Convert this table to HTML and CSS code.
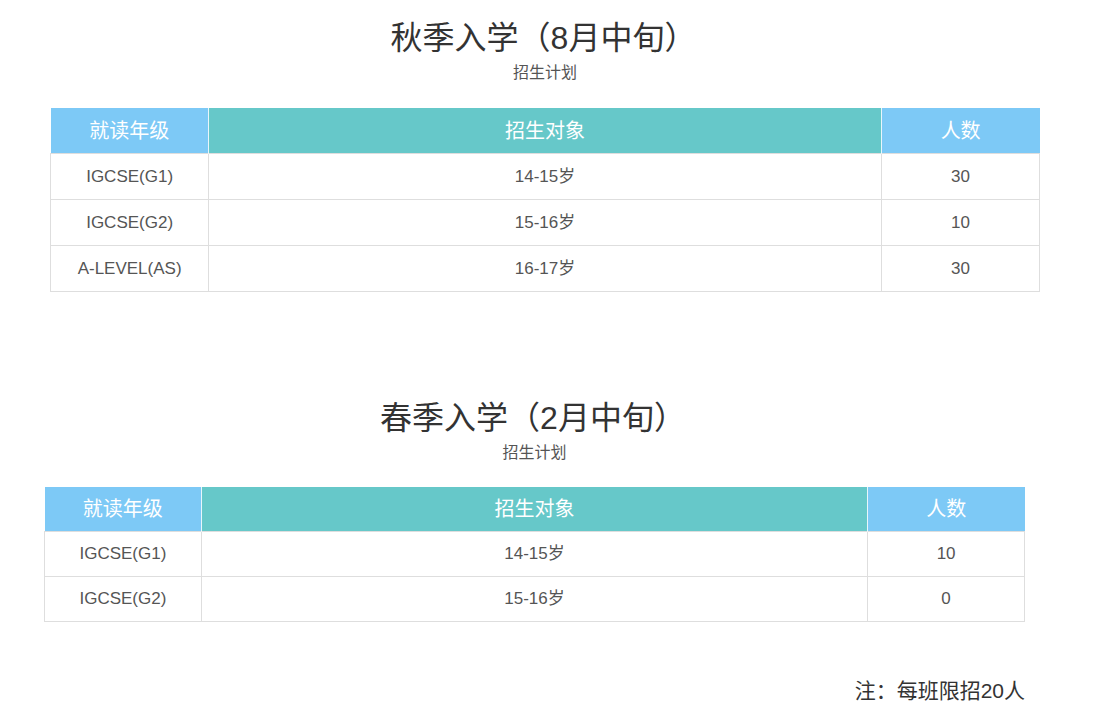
FILE: index.html
```html
<!DOCTYPE html>
<html lang="zh-CN">
<head>
<meta charset="utf-8">
<title>招生计划</title>
<link rel="stylesheet" href="styles.css">
</head>
<body>
<section class="plan plan-autumn">
  <h2 class="plan-title">秋季入学<span class="paren">（</span>8月中旬<span class="paren">）</span></h2>
  <p class="plan-sub">招生计划</p>
  <table class="plan-table">
    <colgroup><col class="c-grade"><col class="c-age"><col class="c-num"></colgroup>
    <thead>
      <tr><th class="th-blue">就读年级</th><th class="th-teal">招生对象</th><th class="th-blue">人数</th></tr>
    </thead>
    <tbody>
      <tr><td>IGCSE(G1)</td><td>14-15岁</td><td>30</td></tr>
      <tr><td>IGCSE(G2)</td><td>15-16岁</td><td>10</td></tr>
      <tr><td>A-LEVEL(AS)</td><td>16-17岁</td><td>30</td></tr>
    </tbody>
  </table>
</section>
<section class="plan plan-spring">
  <h2 class="plan-title">春季入学<span class="paren">（</span>2月中旬<span class="paren">）</span></h2>
  <p class="plan-sub">招生计划</p>
  <table class="plan-table">
    <colgroup><col class="c-grade"><col class="c-age"><col class="c-num"></colgroup>
    <thead>
      <tr><th class="th-blue">就读年级</th><th class="th-teal">招生对象</th><th class="th-blue">人数</th></tr>
    </thead>
    <tbody>
      <tr><td>IGCSE(G1)</td><td>14-15岁</td><td>10</td></tr>
      <tr><td>IGCSE(G2)</td><td>15-16岁</td><td>0</td></tr>
    </tbody>
  </table>
  <p class="note">注：每班限招20人</p>
</section>
</body>
</html>
```
FILE: styles.css
```css
html, body {
  margin: 0;
  padding: 0;
  background: #fff;
}
body {
  font-family: "Liberation Sans", "Noto Sans CJK SC", sans-serif;
  color: #555;
}
.plan {
  display: flex;
  flex-direction: column;
}
.plan-autumn {
  margin: 0 62px 0 50px;
  padding-top: 19px;
}
.plan-spring {
  margin: 0 77px 0 44px;
  padding-top: 107px;
}
.plan-title {
  margin: 0;
  font-weight: normal;
  font-size: 32px;
  line-height: 38px;
  height: 38px;
  color: #333;
  text-align: center;
  padding-right: 3px;
}
.paren {
  display: inline-block;
  width: 1em;
  text-align: center;
  line-height: 38px;
  vertical-align: top;
}
.plan-sub {
  margin: 0;
  font-size: 16px;
  line-height: 22px;
  color: #555;
  text-align: center;
  margin-top: 5px;
}
.plan-table {
  width: 100%;
  border-collapse: collapse;
  table-layout: fixed;
  margin-top: 24px;
}
.plan-spring .plan-table {
  margin-top: 23px;
}
.c-grade { width: 16%; }
.c-num { width: 16%; }
.plan-table th {
  height: 45px;
  padding: 0;
  color: #fff;
  font-weight: normal;
  font-size: 20px;
  line-height: 24px;
  text-align: center;
  vertical-align: middle;
  border-left: 1px solid #e8f6fb;
}
.plan-spring .plan-table th {
  height: 44px;
}
.plan-table th:first-child { border-left: none; }
.th-blue { background: #7dc9f6; }
.th-teal { background: #66c8c9; }
.plan-table td {
  height: 45px;
  padding: 0;
  text-align: center;
  vertical-align: middle;
  font-size: 17px;
  line-height: 20px;
  color: #555;
  border: 1px solid #dedede;
}
.plan-spring .plan-table td {
  height: 44px;
}
.note {
  margin: 54px 0 0;
  text-align: right;
  font-size: 21px;
  color: #333;
  line-height: 30px;
}
```
